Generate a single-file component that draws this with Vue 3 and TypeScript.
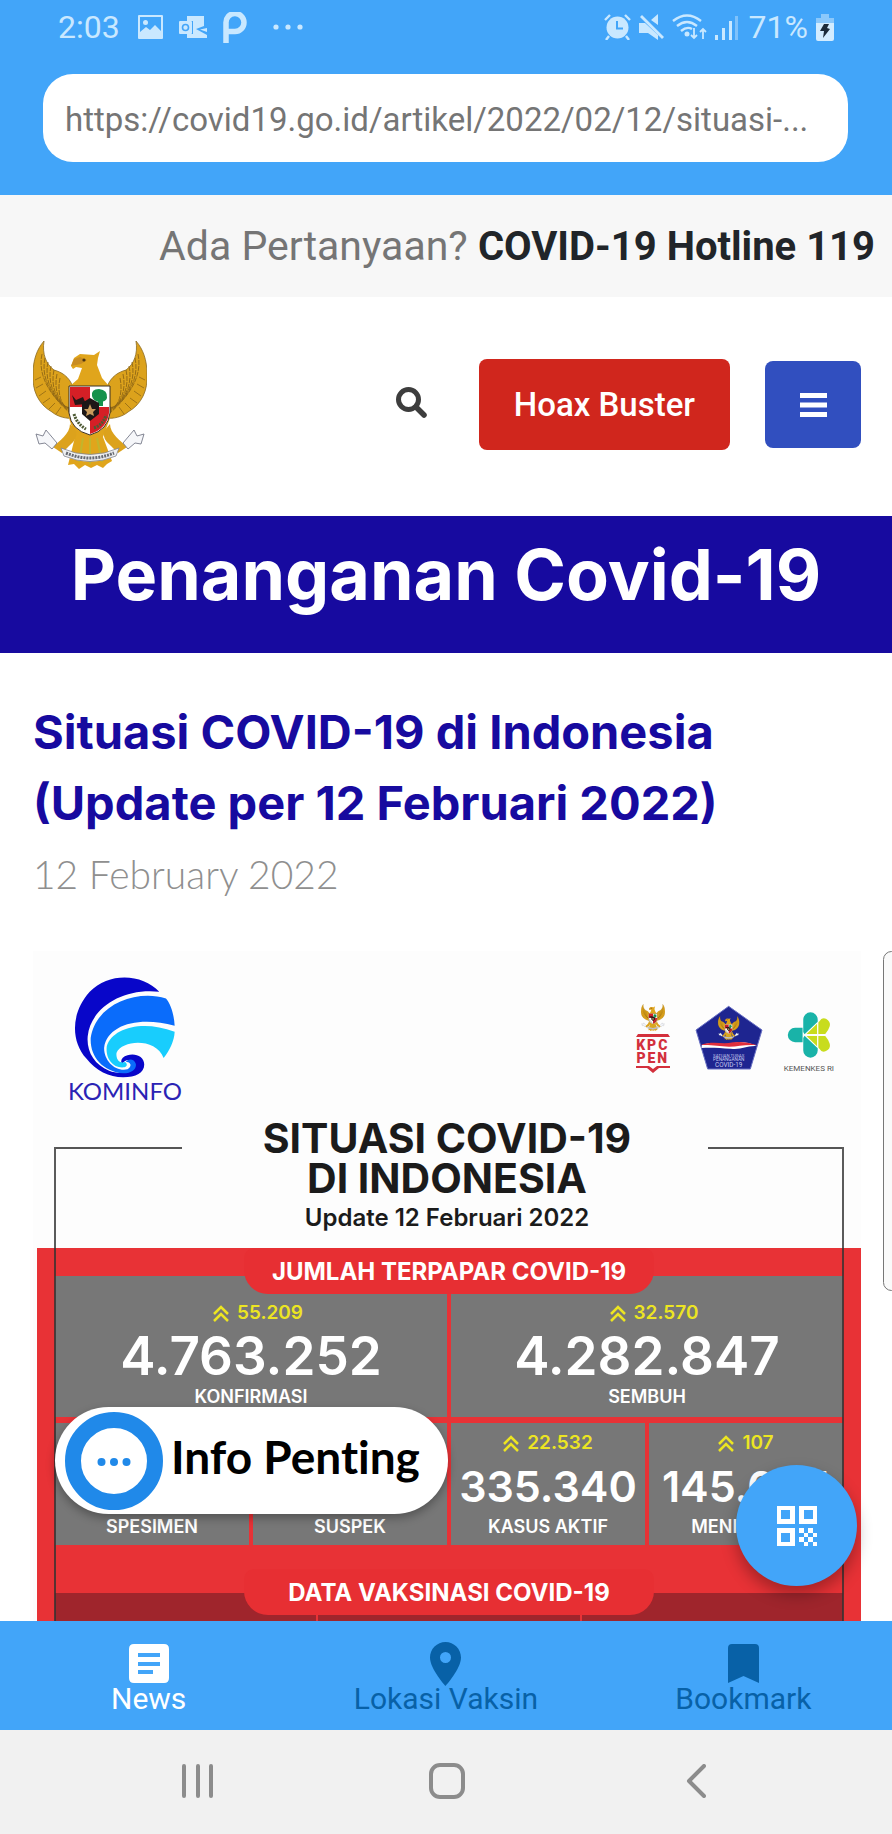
<script setup lang="ts">
import { ref } from 'vue'

interface Stat {
  label: string
  value?: string
  delta?: string
  wide?: boolean
}

const url = ref('https://covid19.go.id/artikel/2022/02/12/situasi-...')

const stats: Stat[] = [
  { label: 'KONFIRMASI', value: '4.763.252', delta: '55.209', wide: true },
  { label: 'SEMBUH', value: '4.282.847', delta: '32.570', wide: true },
  { label: 'SPESIMEN' },
  { label: 'SUSPEK' },
  { label: 'KASUS AKTIF', value: '335.340', delta: '22.532' },
  { label: 'MENINGGAL', value: '145.065', delta: '107' }
]

const feathers = [0, 1, 2, 3, 4, 5, 6]
</script>

<template>
  <div class="shell">
    <svg class="defs" aria-hidden="true">
      <symbol id="garuda" viewBox="0 0 114 129">
        <g id="garuda-wing">
          <path d="M11 1 C4 9 0 20 0 34 C-1 50 5 64 19 72 C25 77 34 79 40 78 V47 C36 36 28 32 21 30 C13 24 9 14 11 1Z" fill="#dca21c" stroke="#8a6a22" stroke-width="0.8" />
          <path
            v-for="i in feathers"
            :key="i"
            :d="`M${9 + i * 3} ${14 + i * 4} C${5 + i * 3} ${32 + i * 4} ${13 + i * 3} ${52 + i * 3} ${37} ${73 - i}`"
            fill="none"
            stroke="#8f6715"
            stroke-width="0.9"
            stroke-dasharray="5 1"
          />
          <path d="M2 40 L8 37 M3 48 L10 44 M6 56 L13 51 M10 63 L17 58 M16 69 L22 63 M23 74 L28 67" stroke="#8f6715" stroke-width="0.8" />
        </g>
        <use href="#garuda-wing" transform="matrix(-1 0 0 1 114 0)" />
        <path d="M38 26 L41 18 L47 14 L61 15 L67 11 L65 18 L64 25 L69 38 L76 46 L77 78 L70 97 L79 121 L74 124 L70 128 L64 125 L58 128 L52 125 L46 129 L41 124 L35 125 L42 97 L36 78 L37 46 L45 39 L49 28 L43 27 L40 29Z" fill="#e0a51c" />
        <path d="M38 26 L41 19 L47 17 L54 20 L48 24Z" fill="#c98d22" />
        <circle cx="51" cy="20" r="1.6" fill="#4b3510" />
        <path d="M50 98 L46 122 M57 98 V124 M64 98 L69 122" stroke="#c2b52c" stroke-width="2" />
        <path d="M37 84 C37 94 26 101 20 107 L29 113 L36 106 Q45 99 43 91Z M77 84 C77 94 88 101 94 107 L85 113 L78 106 Q69 99 71 91Z" fill="#dca21c" />
        <path d="M36 46 H77 V73 Q75 90 57 95 Q38 90 36 73Z" fill="#fff" stroke="#3b3024" />
        <path d="M37 47 H57 V67 H37Z M57 67 H76 V73 Q74 89 57 94Z" fill="#d51f26" />
        <path d="M59 56 Q58 49 66 49 Q75 50 74 58 Q73 62 66 62 Q60 61 59 56Z" fill="#16924c" />
        <path d="M65 58 H70 V66 H65Z" fill="#16924c" />
        <path d="M39 55 L43 60 L50 57 L53 64 L42 65Z" fill="#291617" />
        <path d="M41 74 Q44 84 53 89 M61 88 Q70 85 73 75" fill="none" stroke="#4d5a33" stroke-width="3" stroke-dasharray="2 1" />
        <path d="M57 58 L66 63 V74 L57 81 L49 74 V63Z" fill="#1d1717" />
        <path d="M57 64 L59 69 L63 69 L60 72 L61 76 L57 74 L53 76 L54 72 L51 69 L55 69Z" fill="#c99a5b" />
        <path d="M28 108 Q57 121 86 108 L83 116 Q57 127 31 116Z" fill="#eef0f2" stroke="#83858f" stroke-width="0.8" />
        <path d="M33 113 Q57 123 81 113" fill="none" stroke="#676a72" stroke-width="3" stroke-dasharray="2 1" />
        <path d="M3 94 L10 96 L13 90 L24 103 L19 109 L12 103 L6 104Z M111 94 L104 96 L101 90 L90 103 L95 109 L102 103 L108 104Z" fill="#f6f7fa" stroke="#777b89" stroke-width="0.9" />
      </symbol>
    </svg>

    <header class="topbar">
      <div class="status">
        <span class="clock">2:03</span>
        <svg width="25" height="24" viewBox="0 0 25 24">
          <path fill-rule="evenodd" d="M1 0 H24 Q25 0 25 1 V23 Q25 24 24 24 H1 Q0 24 0 23 V1 Q0 0 1 0Z M2 2 V17 L8 12 L12 15 L17 10 L23 16 V2Z" fill="#c9e8ff" />
          <circle cx="7.500" cy="7.500" r="2.500" fill="#c9e8ff" />
        </svg>
        <svg class="gap-mail" width="28" height="23" viewBox="0 0 28 23">
          <path d="M8 0 H25 V10 L17 13 L28 19 V22 H8 V18 H14 V5 H8Z M28 12 V16 L21 13.500Z" fill="#c9e8ff" />
          <rect y="5" width="13" height="13" rx="1" fill="#c9e8ff" />
          <circle cx="6.500" cy="11.500" r="3" fill="none" stroke="#42a5f9" stroke-width="1.600" />
        </svg>
        <svg class="gap-mail" width="24" height="31" viewBox="0 0 24 31">
          <path d="M3 31 V11 A9 9 0 1 1 12 19.500 H5" fill="none" stroke="#c9e8ff" stroke-width="5.500" />
        </svg>
        <svg class="gap-dots" width="30" height="6" viewBox="0 0 30 6">
          <g fill="#c9e8ff"><circle cx="3" cy="3" r="2.600" /><circle cx="15" cy="3" r="2.600" /><circle cx="27" cy="3" r="2.600" /></g>
        </svg>
        <span class="spacer"></span>
        <svg width="27" height="26" viewBox="0 0 27 26">
          <circle cx="13.500" cy="13.500" r="11" fill="#c9e8ff" />
          <path d="M1 6 L6 1 M26 6 L21 1 M5 22 L2 26 M22 22 L25 26" stroke="#c9e8ff" stroke-width="2.400" />
          <path d="M13 7 V14.500 H19" fill="none" stroke="#42a5f9" stroke-width="2" />
        </svg>
        <svg class="gap-small" width="25" height="27" viewBox="0 0 25 27">
          <path d="M0 9 H6 L19 21 V26 L9 19 H0Z M19 0 V11 L12 6Z" fill="#c9e8ff" />
          <path d="M2 2 L24 24" stroke="#c9e8ff" stroke-width="2.800" />
        </svg>
        <svg class="gap-small" width="35" height="26" viewBox="0 0 35 26">
          <g fill="none" stroke="#c9e8ff" stroke-width="2.400">
            <path d="M1 7 Q15 -4 29 7 M5 12 Q15 4 25 12 M9 17 Q15 12 20 15" />
            <path d="M22 14 V24 M19 21 L22 24 L25 21 M31 25 V15 M28 18 L31 15 L34 18" stroke-width="1.800" />
          </g>
          <circle cx="15" cy="20" r="2.500" fill="#c9e8ff" />
        </svg>
        <svg class="gap-small" width="24" height="25" viewBox="0 0 24 25">
          <path d="M0 20 H3 V25 H0Z M7 13 H10 V25 H7Z M14 6 H17 V25 H14Z" fill="#c9e8ff" />
          <path d="M20 1 H23 V25 H20Z" fill="#7fc2fb" />
        </svg>
        <span class="percent">71%</span>
        <svg class="gap-small" width="18" height="27" viewBox="0 0 18 27">
          <path d="M5 0 H13 V4 H18 V10 H0 V4 H5Z" fill="#8bc8fb" />
          <path d="M0 9 H18 V25 Q18 27 16 27 H2 Q0 27 0 25Z" fill="#d3ecff" />
          <path d="M8 10 L13 10 L11 14 L14 15 L7 24 L8 17 L4 17Z" fill="#1c2b3a" />
        </svg>
      </div>
      <input v-model="url" class="address" type="text" aria-label="Alamat situs" />
    </header>

    <main class="viewport">
      <div class="hotline">Ada Pertanyaan? <strong>COVID-19 Hotline 119</strong></div>

      <div class="sitebar">
        <svg class="emblem" viewBox="0 0 114 129" role="img" aria-label="Garuda Pancasila"><use href="#garuda" /></svg>
        <span class="spacer"></span>
        <button class="search" type="button" aria-label="Cari">
          <svg width="31" height="31" viewBox="0 0 31 31">
            <circle cx="12.500" cy="12.500" r="10" fill="none" stroke="#3d3d3d" stroke-width="5" />
            <path d="M20 20 L28 28" stroke="#3d3d3d" stroke-width="5.500" stroke-linecap="round" />
          </svg>
        </button>
        <button class="hoax" type="button">Hoax Buster</button>
        <button class="menu" type="button" aria-label="Menu">
          <svg width="27" height="24" viewBox="0 0 27 24"><path d="M0 0 H27 V5 H0Z M0 9.500 H27 V14.500 H0Z M0 19 H27 V24 H0Z" fill="#fff" /></svg>
        </button>
      </div>

      <div class="banner">Penanganan Covid-19</div>

      <article class="article">
        <h1>Situasi COVID-19 di Indonesia (Update per 12 Februari 2022)</h1>
        <p class="date">12 February 2022</p>

        <section class="poster">
          <div class="frame"></div>
          <div class="logos">
            <div class="kominfo">
              <svg width="102" height="102" viewBox="225 105 305 305">
                <path d="M480 152 C430 98 330 92 272 152 C215 215 215 300 262 352 C290 388 330 408 372 408 C410 408 435 395 435 370 C435 345 408 335 385 342 C368 347 362 358 369 368 C378 352 402 352 404 370 C404 395 360 400 330 388 C285 370 262 330 266 285 C275 200 370 140 480 152Z" fill="#0806c9" />
                <path d="M500 172 C410 145 290 190 275 290 C272 345 310 390 372 396 C400 396 412 382 410 368 C405 350 385 352 380 362 C395 360 400 375 385 384 C350 392 315 360 315 320 C325 250 420 225 526 254 C524 220 515 190 500 172Z" fill="#0a6cfb" />
                <path d="M526 272 C430 235 340 260 323 315 C318 355 345 382 375 378 C385 375 385 368 378 362 C362 368 350 355 352 335 C370 295 470 290 493 350 C510 330 525 300 526 272Z" fill="#18cdfd" />
              </svg>
              <span>KOMINFO</span>
            </div>
            <div class="partners">
              <div class="kpc">
                <svg width="26" height="27" viewBox="0 0 114 129"><use href="#garuda" /></svg>
                <svg width="34" height="3" viewBox="0 0 34 3"><path d="M2 0 H32 L34 3 H0Z" fill="#d3303c" /></svg>
                <strong>KPC</strong>
                <strong>PEN</strong>
                <svg width="34" height="8" viewBox="0 0 34 8"><path d="M0 1 H13 L17 4 L21 1 H34 V3 H23 L17 8 L11 3 H0Z" fill="#d3303c" /></svg>
              </div>
              <svg class="satgas" width="68" height="65" viewBox="748 195 204 195">
                <path d="M849 199 L949 270 L914 387 H786 L751 270Z" fill="#1e2590" stroke="#6870c4" stroke-width="3" />
                <use href="#garuda" x="809" y="228" width="80" height="72" />
                <path d="M768 316 C800 300 830 322 868 308 Q895 302 934 318 C900 316 890 330 855 326 C825 325 800 322 768 324Z" fill="#fff" />
                <path d="M766 315 C800 302 830 314 862 307 Q895 302 936 316 C900 312 880 320 850 320 C820 318 800 314 766 315Z" fill="#e02e3c" />
                <g fill="#c8cbef" font-family="Roboto, sans-serif" text-anchor="middle">
                  <text x="849" y="350" font-size="13">SATUAN TUGAS</text>
                  <text x="849" y="363" font-size="14">PENANGANAN</text>
                  <text x="849" y="380" font-size="19">COVID-19</text>
                </g>
              </svg>
              <div class="kemenkes">
                <svg width="44" height="46" viewBox="1025 217 131 140">
                  <path d="M1071 265 V309 H1048 A22 22 0 0 1 1048 265Z M1073 262 V240 A22 22 0 0 1 1117 240 V247 L1077 285 L1073 278Z M1073 312 V334 A22 22 0 0 0 1117 334 V327 L1077 289 L1073 296Z" fill="#19b3a8" />
                  <path d="M1083 284 L1115 253 V284Z M1119 284 V249 L1128 238 A19 19 0 0 1 1153 262 Q1150 272 1140 284Z M1083 290 L1115 321 V290Z M1119 290 V325 L1128 336 A19 19 0 0 0 1153 312 Q1150 302 1140 290Z" fill="#c8dc1d" />
                </svg>
                <span>KEMENKES RI</span>
              </div>
            </div>
          </div>

          <h2>SITUASI COVID-19<br />DI INDONESIA</h2>
          <p class="update">Update 12 Februari 2022</p>

          <div class="data">
            <div class="strip"><h3 class="tab">JUMLAH TERPAPAR COVID-19</h3></div>
            <div class="grid">
              <div v-for="s in stats" :key="s.label" class="cell" :class="{ wide: s.wide }">
                <span v-if="s.delta" class="delta">
                  <svg width="16" height="17" viewBox="0 0 16 17"><path d="M1 9 L8 2 L15 9 M1 16 L8 9 L15 16" fill="none" stroke="#ece522" stroke-width="2.500" /></svg>
                  {{ s.delta }}
                </span>
                <span v-if="s.value" class="value">{{ s.value }}</span>
                <span class="label">{{ s.label }}</span>
              </div>
            </div>
            <div class="strip second"><h3 class="tab">DATA VAKSINASI COVID-19</h3></div>
            <div class="vaccines"><span></span><span></span><span></span></div>
          </div>
        </section>
      </article>

      <div class="edge"></div>
      <button class="info" type="button">
        <svg width="98" height="98" viewBox="0 0 98 98">
          <circle cx="49" cy="49" r="41" fill="#fff" stroke="#2089e9" stroke-width="16" />
          <g fill="#2089e9"><circle cx="36.500" cy="50" r="4" /><circle cx="49" cy="50" r="4" /><circle cx="61.500" cy="50" r="4" /></g>
        </svg>
        <span>Info Penting</span>
      </button>
      <button class="fab" type="button" aria-label="Pindai kode QR">
        <svg width="40" height="40" viewBox="0 0 18 18" fill="#fff" shape-rendering="crispEdges">
          <path fill-rule="evenodd" d="M0 0 H8 V8 H0Z M2 2 V6 H6 V2Z M10 0 H18 V8 H10Z M12 2 V6 H16 V2Z M0 10 H8 V18 H0Z M2 12 V16 H6 V12Z" />
          <path d="M10 10h2v2h-2z M14 10h2v2h-2z M12 12h2v2h-2z M16 12h2v2h-2z M10 14h2v2h-2z M14 14h2v2h-2z M12 16h2v2h-2z M16 16h2v2h-2z" />
        </svg>
      </button>
    </main>

    <nav class="tabs">
      <a href="#news" class="active">
        <svg width="40" height="44" viewBox="0 0 40 44"><path fill-rule="evenodd" d="M5 2 H35 Q40 2 40 7 V36 Q40 41 35 41 H5 Q0 41 0 36 V7 Q0 2 5 2Z M9 11 V15 H31 V11Z M9 20 V24 H31 V20Z M9 28 V32 H24 V28Z" fill="#fff" /></svg>
        News
      </a>
      <a href="#lokasi">
        <svg width="31" height="44" viewBox="0 0 31 44"><path fill-rule="evenodd" d="M15.500 0 C7 0 0 7 0 15.500 C0 27 15.500 44 15.500 44 S31 27 31 15.500 C31 7 24 0 15.500 0Z M15.500 10 A5.500 5.500 0 1 1 15.500 21 A5.500 5.500 0 1 1 15.500 10Z" fill="#0861a7" /></svg>
        Lokasi Vaksin
      </a>
      <a href="#bookmark">
        <svg width="31" height="44" viewBox="0 0 31 44"><path d="M4 2 H27 Q31 2 31 6 V41 L15.500 34 L0 41 V6 Q0 2 4 2Z" fill="#0861a7" /></svg>
        Bookmark
      </a>
    </nav>

    <div class="system">
      <button type="button" aria-label="Aplikasi terbaru">
        <svg width="32" height="34" viewBox="0 0 32 34"><path d="M2 2 V32 M16 2 V32 M29 2 V32" stroke="#8c8c8c" stroke-width="4" stroke-linecap="round" /></svg>
      </button>
      <button type="button" aria-label="Beranda">
        <svg width="36" height="36" viewBox="0 0 36 36"><rect x="2" y="2" width="32" height="32" rx="9" fill="none" stroke="#8c8c8c" stroke-width="4" /></svg>
      </button>
      <button type="button" aria-label="Kembali">
        <svg width="20" height="34" viewBox="0 0 20 34"><path d="M18 2 L3 17 L18 32" fill="none" stroke="#8c8c8c" stroke-width="4" stroke-linecap="round" stroke-linejoin="round" /></svg>
      </button>
    </div>
  </div>
</template>

<style>
body {
  margin: 0;
}
</style>

<style scoped>
.shell {
  display: flex;
  flex-direction: column;
  height: 100vh;
  overflow: hidden;
  background: #fff;
  font-family: Roboto, "Liberation Sans", sans-serif;
}
.shell * {
  box-sizing: border-box;
}
.shell svg {
  display: block;
  flex: none;
}
.shell .defs {
  position: absolute;
  width: 0;
  height: 0;
}
button {
  border: 0;
  padding: 0;
  background: none;
  font-family: inherit;
  display: flex;
  align-items: center;
  justify-content: center;
}
.spacer {
  flex: 1;
}

.topbar {
  flex: none;
  background: #42a5f9;
  padding: 0 44px 33px 43px;
}
.status {
  display: flex;
  align-items: center;
  height: 54px;
  padding: 0 14px 0 15px;
  margin-bottom: 20px;
  color: #c9e8ff;
  font-size: 32px;
}
.clock {
  margin-right: 18px;
}
.gap-mail {
  margin-left: 16px;
}
.gap-dots {
  margin-left: 26px;
}
.gap-small {
  margin-left: 8px;
}
.percent {
  margin-left: 10px;
}
.address {
  display: block;
  width: 100%;
  height: 88px;
  padding: 2px 20px 0 22px;
  border: 0;
  border-radius: 30px;
  background: #fff;
  color: #757575;
  font: 400 33px Roboto, sans-serif;
}

.viewport {
  position: relative;
  flex: 1;
  min-height: 0;
  overflow: hidden;
}
.hotline {
  height: 102px;
  padding: 0 17px;
  background: #f7f7f7;
  color: #757575;
  font-size: 41px;
  line-height: 102px;
  text-align: right;
  white-space: nowrap;
}
.hotline strong {
  color: #212529;
  font-size: 40px;
}
.sitebar {
  display: flex;
  align-items: center;
  height: 219px;
  padding: 0 31px 4px;
}
.emblem {
  width: 118px;
  height: 129px;
}
.search {
  margin-right: 52px;
  padding-bottom: 5px;
}
.hoax {
  height: 91px;
  padding: 0 35px;
  margin-right: 35px;
  border-radius: 8px;
  background: #d0261d;
  color: #fff;
  font-size: 33px;
  font-weight: 500;
}
.menu {
  width: 96px;
  height: 87px;
  border-radius: 8px;
  background: #314fbf;
}
.banner {
  height: 137px;
  background: #170a9f;
  color: #fff;
  font: 700 70px/118px Inter, sans-serif;
  text-align: center;
}
.article {
  padding: 43px 31px 0 33px;
}
h1 {
  max-width: 740px;
  margin: 0;
  color: #170a9f;
  font: 700 47px/71px Inter, sans-serif;
}
.date {
  margin: 0 0 41px;
  color: #8f8f8f;
  font: 300 39px/72px Lato, sans-serif;
}

.poster {
  position: relative;
  background: #fdfdfd;
  color: #1b1b1b;
  font-family: Inter, sans-serif;
  text-align: center;
}
.frame {
  position: absolute;
  z-index: 1;
  inset: 196px 17px 0 21px;
  border: 2px solid rgba(50, 50, 50, 0.8);
  border-top: 0;
}
.frame::before,
.frame::after {
  content: "";
  position: absolute;
  top: 0;
  left: 0;
  width: 16%;
  height: 2px;
  background: #555;
}
.frame::after {
  right: 0;
  left: auto;
  width: 17%;
}
.logos {
  display: flex;
  justify-content: space-between;
  align-items: flex-start;
  height: 167px;
  padding: 25px 27px 0 35px;
}
.kominfo {
  display: flex;
  flex-direction: column;
  align-items: center;
  color: #2a22b4;
  font: 400 24px/26px Lato, sans-serif;
}
.partners {
  display: flex;
  gap: 21px;
  padding-top: 28px;
}
.kpc {
  display: flex;
  flex-direction: column;
  align-items: center;
  width: 42px;
  color: #d3303c;
  font: 700 14px/13px Roboto, sans-serif;
}
.kpc strong {
  letter-spacing: 2px;
}
.kpc svg + svg {
  margin: 3px 0 2px;
}
.satgas {
  margin-top: 1px;
}
.kemenkes {
  display: flex;
  flex-direction: column;
  align-items: center;
  gap: 6px;
  padding-top: 8px;
  color: #555;
  font: 400 8px/10px Roboto, sans-serif;
}
h2 {
  margin: 0;
  font-size: 41px;
  font-weight: 700;
  line-height: 40px;
}
.update {
  margin: 0;
  padding-bottom: 10px;
  font-size: 24px;
  font-weight: 600;
  line-height: 40px;
}
.data {
  margin-left: 4px;
  padding: 0 18px;
  background: #e83236;
  color: #fff;
}
.strip {
  position: relative;
  display: flex;
  justify-content: center;
  height: 28px;
}
.second {
  height: 48px;
  padding-top: 24px;
}
.tab {
  flex: none;
  width: 52%;
  height: 46px;
  margin: 0;
  border-radius: 10px 10px 24px 24px;
  background: #e72f33;
  font-size: 24px;
  font-weight: 700;
  line-height: 48px;
}
.grid {
  display: grid;
  grid-template-columns: repeat(4, minmax(0, 1fr));
  gap: 6px 4px;
}
.cell {
  display: flex;
  flex-direction: column;
  align-items: center;
  justify-content: flex-end;
  height: 122px;
  padding-bottom: 5px;
  background: #777;
}
.wide {
  grid-column: span 2;
  height: 141px;
  padding-bottom: 7px;
}
.delta {
  display: flex;
  align-items: center;
  gap: 8px;
  color: #ece522;
  font-size: 19px;
  font-weight: 600;
  line-height: 30px;
}
.wide .delta {
  padding-left: 14px;
}
.value {
  font-size: 43px;
  font-weight: 600;
  line-height: 56px;
}
.wide .value {
  font-size: 53px;
}
.label {
  font-size: 18px;
  font-weight: 600;
  line-height: 26px;
}
.vaccines {
  display: grid;
  grid-template-columns: repeat(3, 1fr);
  gap: 2px;
  height: 150px;
}
.vaccines span {
  background: #9f252c;
}

.edge {
  position: absolute;
  top: 756px;
  right: -8px;
  width: 17px;
  height: 340px;
  border: 1px solid #777;
  border-radius: 9px;
  background: #fafafa;
}
.info {
  position: absolute;
  z-index: 2;
  left: 55px;
  bottom: 107px;
  gap: 8px;
  height: 107px;
  padding: 0 28px 0 10px;
  border-radius: 54px;
  background: #fff;
  box-shadow: 0 4px 10px rgba(0, 0, 0, 0.3);
  color: #000;
  font: 700 46px/60px Lato, sans-serif;
  font-variant-ligatures: none;
  white-space: nowrap;
}
.info span {
  padding-bottom: 7px;
}
.fab {
  position: absolute;
  z-index: 2;
  right: 35px;
  bottom: 35px;
  width: 121px;
  height: 121px;
  border-radius: 50%;
  background: #42a5f9;
  box-shadow: 0 8px 16px rgba(0, 0, 0, 0.3);
}

.tabs {
  display: grid;
  grid-template-columns: repeat(3, 1fr);
  height: 109px;
  flex: none;
  background: #42a5f9;
}
.tabs a {
  display: flex;
  flex-direction: column;
  align-items: center;
  padding-top: 21px;
  color: #0861a7;
  font-size: 30px;
  line-height: 26px;
  text-decoration: none;
}
.tabs .active {
  color: #fff;
}
.system {
  display: grid;
  grid-template-columns: repeat(3, 1fr);
  height: 104px;
  flex: none;
  padding: 0 72px 2px 74px;
  background: #f1f1f1;
}
</style>
